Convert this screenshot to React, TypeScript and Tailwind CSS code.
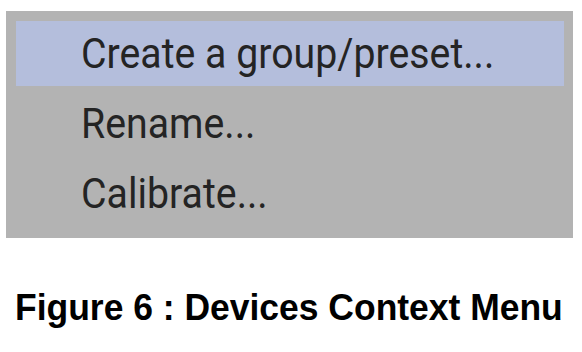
export default function App() {
  const items = ['Create a group/preset...', 'Rename...', 'Calibrate...'];
  return (
    <div className="w-[582px] h-[352px] bg-white overflow-hidden">
      <div className="ml-[6px] mt-[11px] w-[567px] h-[227px] bg-[#b3b3b3] pt-[10px] pl-[10px]">
        {items.map((t, i) => (
          <div
            key={t}
            className={`w-[548px] h-[65px] mb-[5px] pl-[65px] flex items-center ${
              i === 0 ? 'bg-[#b4bedc]' : ''
            }`}
          >
            <span
              className="inline-block whitespace-nowrap origin-left scale-x-[0.935] text-[#242424] text-[42px] leading-none"
              style={{ fontFamily: 'Roboto, "Noto Sans", sans-serif' }}
            >
              {t}
            </span>
          </div>
        ))}
      </div>
      <div className="mt-[52px] pl-[15px]">
        <span
          className="inline-block whitespace-nowrap origin-left scale-x-[0.985] text-black font-bold text-[36px] leading-none"
          style={{ fontFamily: '"Liberation Sans", Arial, sans-serif' }}
        >
          Figure 6 : Devices Context Menu
        </span>
      </div>
    </div>
  );
}
